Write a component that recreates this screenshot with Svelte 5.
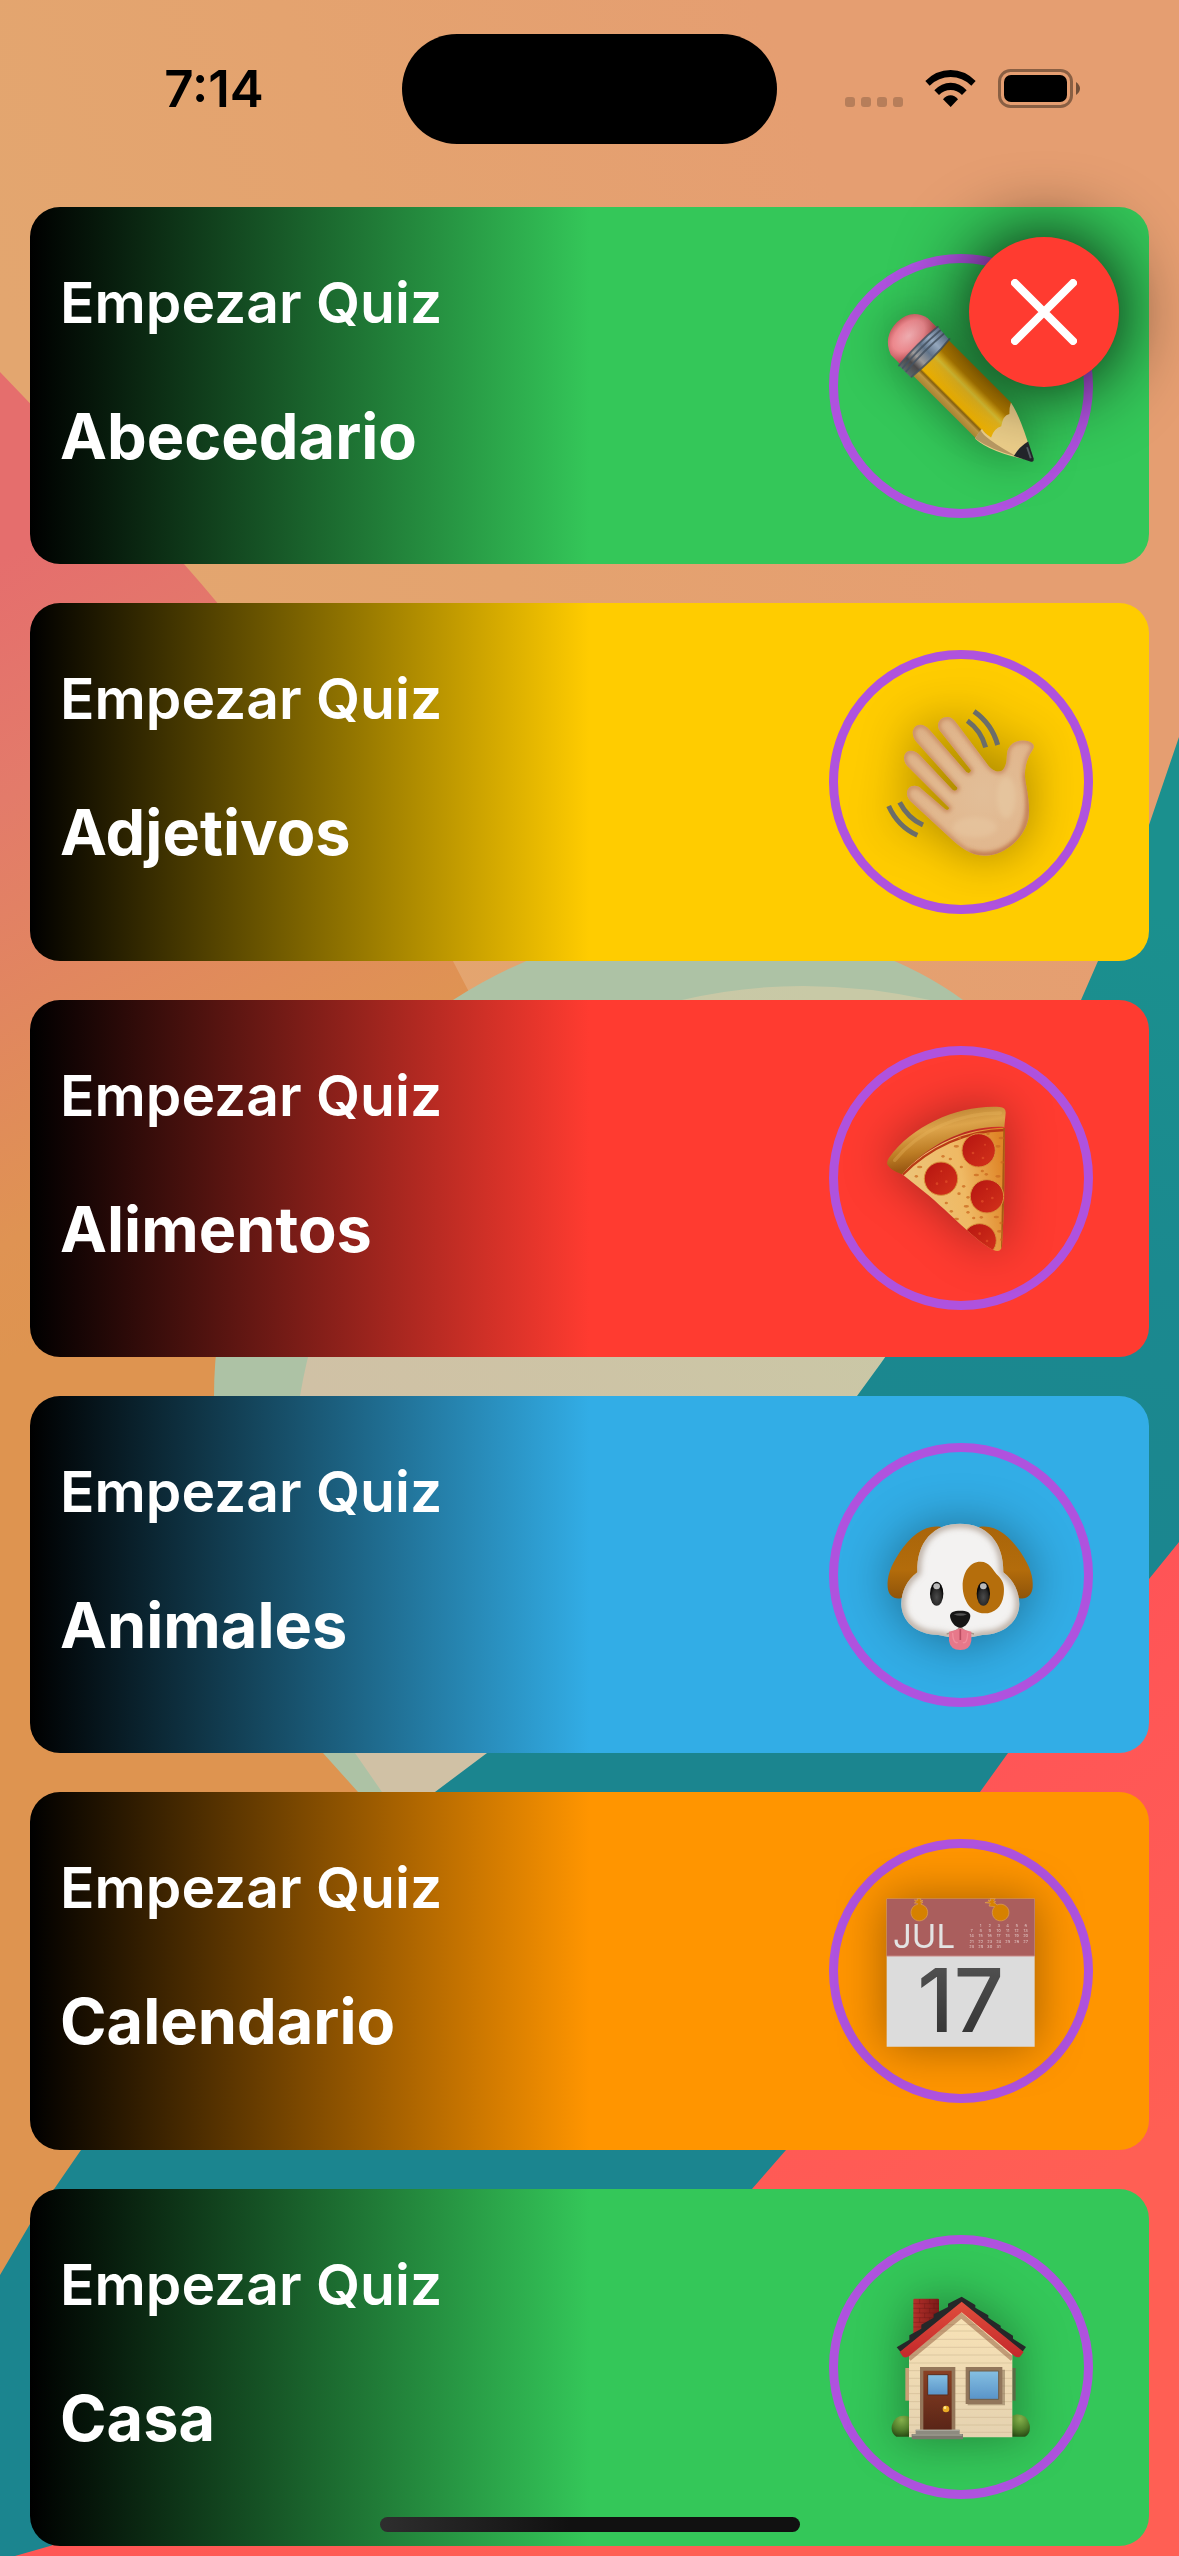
<script>
  const quizzes = [
    { title: 'Abecedario', tone: 'green', icon: 'pencil' },
    { title: 'Adjetivos', tone: 'yellow', icon: 'hand' },
    { title: 'Alimentos', tone: 'red', icon: 'pizza' },
    { title: 'Animales', tone: 'blue', icon: 'dog' },
    { title: 'Calendario', tone: 'orange', icon: 'calendar' },
    { title: 'Casa', tone: 'green', icon: 'house' }
  ];
  const days = Array.from({ length: 31 }, (_, i) => i + 1);
  const crumbs = [
    [470, 350], [452, 388], [485, 412], [530, 436], [548, 424], [560, 434], [595, 440], [505, 503],
    [455, 545], [470, 568], [522, 565], [545, 563], [590, 562], [480, 325], [565, 312], [605, 325],
    [608, 398], [604, 580], [500, 530], [492, 470], [430, 380], [360, 412], [350, 440], [478, 492],
    [600, 605], [606, 630], [530, 408], [595, 350], [505, 548], [440, 520]
  ];
  const boards = [315, 334, 359, 383, 406, 430, 453, 476, 499, 522, 546, 569, 593, 616, 638];
</script>

{#snippet pencil()}
  <svg class="emoji" viewBox="262 394 444 444" aria-hidden="true">
    <defs>
      <linearGradient id="pn-body" x1="0" y1="0" x2="0" y2="1">
        <stop offset="0" stop-color="#a87300" />
        <stop offset=".24" stop-color="#b98100" />
        <stop offset=".36" stop-color="#e0b21c" />
        <stop offset=".42" stop-color="#dfc637" />
        <stop offset=".48" stop-color="#e9b91f" />
        <stop offset=".78" stop-color="#f2b400" />
        <stop offset=".82" stop-color="#8a6410" />
        <stop offset=".88" stop-color="#c39a44" />
        <stop offset="1" stop-color="#ad8733" />
      </linearGradient>
      <linearGradient id="pn-metal" x1="0" y1="0" x2="0" y2="1">
        <stop offset="0" stop-color="#6a7f99" />
        <stop offset=".25" stop-color="#a6bbd3" />
        <stop offset=".45" stop-color="#687c93" />
        <stop offset=".65" stop-color="#a3a09f" />
        <stop offset=".8" stop-color="#4d4a4b" />
        <stop offset="1" stop-color="#5e6b6e" />
      </linearGradient>
      <radialGradient id="pn-rubber" cx=".55" cy=".5" r=".6">
        <stop offset="0" stop-color="#f4b0b4" />
        <stop offset=".6" stop-color="#ee8a8f" />
        <stop offset="1" stop-color="#bd5054" />
      </radialGradient>
    </defs>
    <g transform="translate(318 456) rotate(45) scale(1.108)">
      <path d="M52-70H14Q-35-58-37-4Q-36 52 14 71H52Z" fill="url(#pn-rubber)" />
      <path d="M92-68H335L380-47Q385 0 380 47L345 68H92Z" fill="url(#pn-body)" />
      <path d="M335-68Q385-58 483-3Q488 2 482 7Q390 68 335 70L330 38Q344 42 364 37Q352 14 362-4Q344-28 354-43Q342-54 335-68Z" fill="#edcf8a" />
      <path d="M335 70L330 43Q350 53 448 25Q390 60 335 70Z" fill="#b99a63" />
      <path d="M443-26Q436 0 443 29L487 7Q494 2 486-4Z" fill="#23262b" />
      <path d="M452-13L480 1" stroke="#596068" stroke-width="5" />
      <path d="M50-73Q42 0 50 76H96Q104 0 96-70Z" fill="url(#pn-metal)" />
      <path d="M50-73Q42 0 50 76M62-70Q56 0 62 73M75-70Q69 0 75 73M96-72Q104 0 96 73" fill="none" stroke="#465463" stroke-width="5" stroke-opacity=".8" stroke-linecap="round" />
    </g>
  </svg>
{/snippet}

{#snippet hand()}
  <svg class="emoji" viewBox="262 232 444 444" aria-hidden="true">
    <defs>
      <radialGradient id="hd-skin" gradientUnits="userSpaceOnUse" cx="550" cy="490" r="280">
        <stop offset="0" stop-color="#e2be98" />
        <stop offset=".6" stop-color="#e1b78e" />
        <stop offset="1" stop-color="#dcb188" />
      </radialGradient>
      <clipPath id="hd-clip">
        <path id="hd-shape" d="M418 297C407 273 428 256 447 259C457 261 464 268 471 278L562 399C577 422 603 432 614 411C628 386 614 365 632 345C649 325 685 326 699 339C709 350 695 361 688 377C676 404 672 430 680 466C686 500 691 536 686 565C677 614 622 675 555 675C513 675 481 649 451 621L334 513C321 500 318 484 327 473C338 462 354 464 365 474L436 535Q445 543 449 532L322 405C309 389 311 371 322 363C335 356 350 362 360 373L459 478Q470 485 474 472L351 335C336 318 335 296 349 286C363 278 379 285 390 298L500 424Q512 432 514 419Z" />
      </clipPath>
      <filter id="hd-soft" x="-20%" y="-20%" width="140%" height="140%"><feGaussianBlur stdDeviation="7" /></filter>
    </defs>
    <use href="#hd-shape" fill="url(#hd-skin)" />
    <g clip-path="url(#hd-clip)">
      <ellipse cx="620" cy="500" rx="28" ry="62" fill="#e8caa4" fill-opacity=".6" filter="url(#hd-soft)" />
      <ellipse cx="525" cy="590" rx="66" ry="30" fill="#e8c7a0" fill-opacity=".6" filter="url(#hd-soft)" />
      <use href="#hd-shape" fill="none" stroke="#bd7246" stroke-width="13" stroke-opacity=".65" filter="url(#hd-soft)" />
      <path d="M680 430Q700 540 660 620Q600 690 510 665" fill="none" stroke="#b86b43" stroke-width="14" stroke-opacity=".65" filter="url(#hd-soft)" />
    </g>
    <g fill="none" stroke="#6b6d69" stroke-width="15">
      <path d="M523 242Q577 280 594 343M503 270Q544 299 558 350M267 526Q295 588 353 614M300 515Q325 563 370 583" />
    </g>
  </svg>
{/snippet}

{#snippet pizza()}
  <svg class="emoji" viewBox="262 223 444 444" aria-hidden="true">
    <defs>
      <linearGradient id="pz-cheese" x1="0" y1=".6" x2="1" y2=".4">
        <stop offset="0" stop-color="#ecc67c" />
        <stop offset=".6" stop-color="#efb964" />
        <stop offset="1" stop-color="#df8527" />
      </linearGradient>
      <linearGradient id="pz-crust" x1=".4" y1=".1" x2=".6" y2=".8">
        <stop offset="0" stop-color="#c28937" />
        <stop offset=".3" stop-color="#dda44b" />
        <stop offset=".7" stop-color="#bd7d25" />
        <stop offset="1" stop-color="#9c5a13" />
      </linearGradient>
      <linearGradient id="pz-meat" x1="0" y1="0" x2="1" y2="1">
        <stop offset="0" stop-color="#b51410" />
        <stop offset="1" stop-color="#d4331b" />
      </linearGradient>
      <clipPath id="pz-clip"><path d="M306 432C390 345 500 295 616 294L613 530L607 650Q603 671 581 661C530 635 470 570 390 500Z" /></clipPath>
    </defs>
    <path d="M306 432C390 345 500 295 616 294L613 530L607 650Q603 671 581 661C530 635 470 570 390 500Z" fill="url(#pz-cheese)" />
    <g clip-path="url(#pz-clip)">
      <path d="M306 438C390 352 500 302 620 301" fill="none" stroke="#b93a15" stroke-width="7" />
      <path d="M615 294L608 660" stroke="#a75b15" stroke-width="8" />
      {#each crumbs as [x, y], i}
        <ellipse cx={x} cy={y} rx={i % 3 ? 5 : 8} ry="4" fill="#cb6a20" fill-opacity=".75" />
      {/each}
      <g fill="url(#pz-meat)" stroke="#d9913c" stroke-width="3">
        <circle cx="537" cy="362" r="50" />
        <circle cx="424" cy="447" r="50" />
        <circle cx="562" cy="500" r="50" />
        <circle cx="540" cy="632" r="50" />
      </g>
      <g fill="#e6552c" fill-opacity=".6">
        <circle cx="520" cy="370" r="4" /><circle cx="550" cy="385" r="4" /><circle cx="556" cy="345" r="3" />
        <circle cx="412" cy="462" r="4" /><circle cx="440" cy="456" r="4" /><circle cx="425" cy="425" r="3" />
        <circle cx="548" cy="515" r="4" /><circle cx="578" cy="505" r="4" /><circle cx="562" cy="478" r="3" />
        <circle cx="540" cy="612" r="4" /><circle cx="562" cy="634" r="4" />
      </g>
    </g>
    <path d="M264 407Q259 397 268 384C340 285 480 225 600 232Q619 233 618 250L614 292C500 285 385 345 307 434Q276 424 264 407Z" fill="url(#pz-crust)" />
    <path d="M285 392C360 300 480 250 602 250" fill="none" stroke="#e8b45c" stroke-width="10" stroke-opacity=".35" stroke-linecap="round" />
  </svg>
{/snippet}

{#snippet dog()}
  <svg class="emoji" viewBox="262 211 444 444" aria-hidden="true">
    <defs>
      <linearGradient id="dg-ear" x1="0" y1="0" x2="0" y2="1">
        <stop offset="0" stop-color="#a9650a" />
        <stop offset=".6" stop-color="#b36c0b" />
        <stop offset="1" stop-color="#8f540a" />
      </linearGradient>
      <radialGradient id="dg-eye" cx=".5" cy=".65" r=".5">
        <stop offset="0" stop-color="#4a4a4a" />
        <stop offset=".7" stop-color="#2a2a2a" />
        <stop offset="1" stop-color="#080808" />
      </radialGradient>
      <filter id="dg-soft" x="-20%" y="-20%" width="140%" height="140%"><feGaussianBlur stdDeviation="10" /></filter>
      <clipPath id="dg-clip">
        <path id="dg-face" d="M481 279C560 279 613 333 611 425C643 450 659 485 659 520C659 570 615 612 548 613Q515 622 482 622Q450 622 416 613C348 612 305 570 305 520C305 485 320 450 353 425C350 333 402 279 481 279Z" />
      </clipPath>
    </defs>
    <path d="M425 289C380 280 335 312 300 365C270 410 262 440 264 470C266 496 285 508 306 502L380 430Z" fill="url(#dg-ear)" />
    <path d="M538 289C583 280 628 312 663 365C693 410 701 440 699 470C697 496 678 508 657 502L583 430Z" fill="url(#dg-ear)" />
    <use href="#dg-face" fill="#f3f2f1" />
    <g clip-path="url(#dg-clip)">
      <use href="#dg-face" fill="none" stroke="#9d8b7a" stroke-width="18" stroke-opacity=".8" filter="url(#dg-soft)" />
      <path d="M542 393C572 393 578 418 597 437C612 452 615 470 612 492C607 530 584 548 554 548C515 548 489 510 489 466C489 424 511 393 542 393Z" fill="#b56e0c" />
    </g>
    <ellipse cx="411" cy="489" rx="20" ry="36" fill="url(#dg-eye)" />
    <ellipse cx="551" cy="489" rx="20" ry="36" fill="url(#dg-eye)" />
    <ellipse cx="411" cy="467" rx="10" ry="9" fill="#d8d8d8" fill-opacity=".85" />
    <ellipse cx="551" cy="467" rx="10" ry="9" fill="#d8d8d8" fill-opacity=".85" />
    <path d="M441 610Q470 604 482 589Q496 604 523 610" fill="none" stroke="#a59788" stroke-width="4" />
    <path d="M448 603Q468 600 482 592Q497 600 515 603V630Q511 658 482 658Q452 658 448 630Z" fill="#e7788a" />
    <path d="M459 608Q460 638 473 636M504 608Q503 638 491 636" fill="none" stroke="#f08d9d" stroke-width="4" stroke-linecap="round" />
    <path d="M482 595V628" stroke="#bb4d61" stroke-width="5" />
    <path d="M482 540C502 540 512 545 512 556C511 572 497 591 482 591C466 591 452 572 451 556C451 545 462 540 482 540Z" fill="#161616" />
    <path d="M462 551Q482 544 502 551Q482 560 462 551Z" fill="#555" />
  </svg>
{/snippet}

{#snippet calendar()}
  <svg class="emoji" viewBox="262 229 444 444" aria-hidden="true">
    <defs>
      <linearGradient id="cl-num" x1="0" y1="0" x2="0" y2="1">
        <stop offset="0" stop-color="#575757" />
        <stop offset="1" stop-color="#2f2f2f" />
      </linearGradient>
    </defs>
    <path d="M261 234H705V678H261Z" fill="#dcdcdc" />
    <path d="M261 234H705V406H261Z" fill="#aa5e5d" />
    <path d="M261 406H705" stroke="#c98783" stroke-width="3" />
    <g fill="#d68100" stroke="#e0a255" stroke-width="2">
      <path d="M352 234L354 239L344 238L350 243L344 247L354 248V251A25 25 0 1 0 364 251V248L370 245L362 243L370 240L362 238L363 234Z" />
      <path d="M571 234L574 240L565 238L570 243L556 246L572 248L568 256L585 258A25 25 0 1 0 592 253L587 248L582 246L588 243L582 240L587 234Z" />
    </g>
    <text class="month" x="280" y="383">JUL</text>
    <g class="days">
      {#each days as d}
        <text x={516 + (d % 7) * 27} y={318 + Math.floor(d / 7) * 16}>{d}</text>
      {/each}
    </g>
    <text class="date" x="483" y="634" fill="url(#cl-num)">17</text>
  </svg>
{/snippet}

{#snippet house()}
  <svg class="emoji" viewBox="262 220 444 444" aria-hidden="true">
    <defs>
      <linearGradient id="hs-wall" x1="0" y1="0" x2="0" y2="1">
        <stop offset="0" stop-color="#f9e3b6" />
        <stop offset="1" stop-color="#e5d2b0" />
      </linearGradient>
      <linearGradient id="hs-brick" x1="0" y1="0" x2="1" y2="0">
        <stop offset="0" stop-color="#b5302a" />
        <stop offset="1" stop-color="#7a1a18" />
      </linearGradient>
      <linearGradient id="hs-door" x1="0" y1="0" x2="0" y2="1">
        <stop offset="0" stop-color="#8a4023" />
        <stop offset="1" stop-color="#5a2517" />
      </linearGradient>
      <linearGradient id="hs-glass" x1="0" y1="0" x2="0" y2="1">
        <stop offset="0" stop-color="#85bfe2" />
        <stop offset="1" stop-color="#5994c8" />
      </linearGradient>
      <linearGradient id="hs-red" x1="0" y1="0" x2="0" y2="1">
        <stop offset="0" stop-color="#e04e3c" />
        <stop offset="1" stop-color="#c4282b" />
      </linearGradient>
      <radialGradient id="hs-bush" cx=".5" cy=".2" r=".8">
        <stop offset="0" stop-color="#86b04c" />
        <stop offset=".6" stop-color="#527f2b" />
        <stop offset="1" stop-color="#2b4d15" />
      </radialGradient>
      <clipPath id="hs-clip"><path d="M328 400L485 268L638 400V653H328Z" /></clipPath>
    </defs>
    <path d="M335 651H290Q272 640 277 616Q286 586 315 588L335 592Z" fill="url(#hs-bush)" />
    <path d="M632 651H676Q694 642 690 615Q682 584 652 584L632 590Z" fill="url(#hs-bush)" />
    <path d="M317 445H330V543H317Z" fill="#c9a077" />
    <path d="M636 445H648V543H636Z" fill="#5b6b45" />
    <path d="M341 240Q341 237 344 237H415Q418 237 418 240V310L341 350Z" fill="url(#hs-brick)" />
    <path d="M341 252H418M341 266H418M341 280H418M341 294H418M341 308H410M341 322H390M360 238V252M390 238V252M375 252V266M403 252V266M360 266V280M390 266V280M375 280V294M403 280V294M360 294V308M390 294V308" stroke="#5f1512" stroke-width="2" stroke-opacity=".5" />
    <path d="M328 400L485 268L638 400V653H328Z" fill="url(#hs-wall)" />
    <g clip-path="url(#hs-clip)">
      {#each boards as y}
        <path d="M328 {y}H638" stroke="#c9b48d" stroke-width="3" stroke-opacity=".5" />
      {/each}
      <path d="M328 418L485 288L638 418" fill="none" stroke="#8f5a3a" stroke-width="14" stroke-opacity=".5" />
    </g>
    <path d="M291 383L329 360V347L365 327V315L402 294V284L445 262V252L486 231L527 256V264L566 287V294L603 318V324L640 348V357L679 382L668 397L486 252L303 397Z" fill="#252829" />
    <path d="M300 397L486 246L672 397L661 411Q655 415 645 410L486 278L328 410Q318 416 310 411Z" fill="url(#hs-red)" />
    <path d="M361 442H467V630H361Z" fill="#94765a" />
    <path d="M371 453H456V630H371Z" fill="url(#hs-door)" />
    <path d="M384 465H445V526H384Z" fill="url(#hs-glass)" stroke="#5c2c1b" stroke-width="3" />
    <circle cx="439" cy="568" r="10" fill="#e9ac26" />
    <circle cx="436" cy="564" r="4" fill="#ffe891" />
    <path d="M504 450H616V557H504Z" fill="#7b6549" fill-opacity=".5" />
    <path d="M498 442H608V553H498Z" fill="#92765b" />
    <path d="M509 454H597V539H509Z" fill="url(#hs-glass)" stroke="#6f5c46" stroke-width="3" />
    <path d="M348 630H480V643H348Z" fill="#8d8b80" />
    <path d="M336 643H490V659H336Z" fill="#7b796d" />
    <path d="M348 632H480M338 646H488" stroke="#aeaca1" stroke-width="3" />
  </svg>
{/snippet}

<div class="page">
  <svg class="backdrop" viewBox="0 0 1179 2556" preserveAspectRatio="none" aria-hidden="true">
    <defs>
      <linearGradient id="bg-sky" gradientUnits="userSpaceOnUse" x1="0" y1="300" x2="760" y2="0">
        <stop offset="0" stop-color="#e3a66f" />
        <stop offset=".45" stop-color="#e4a36f" />
        <stop offset="1" stop-color="#e59e71" />
      </linearGradient>
      <linearGradient id="bg-petal" gradientUnits="userSpaceOnUse" x1="0" y1="560" x2="340" y2="1180">
        <stop offset="0" stop-color="#e56e6d" />
        <stop offset=".3" stop-color="#e37b6a" />
        <stop offset=".85" stop-color="#df9353" />
        <stop offset="1" stop-color="#de9450" />
      </linearGradient>
      <linearGradient id="bg-teal" gradientUnits="userSpaceOnUse" x1="1100" y1="900" x2="950" y2="1600">
        <stop offset="0" stop-color="#1b908e" />
        <stop offset=".5" stop-color="#1b898f" />
        <stop offset="1" stop-color="#1b858f" />
      </linearGradient>
      <linearGradient id="bg-coral" gradientUnits="userSpaceOnUse" x1="780" y1="1750" x2="1100" y2="2180">
        <stop offset="0" stop-color="#ff5257" />
        <stop offset="1" stop-color="#ff5f54" />
      </linearGradient>
      <linearGradient id="bg-leaf" gradientUnits="userSpaceOnUse" x1="400" y1="1500" x2="900" y2="1100">
        <stop offset="0" stop-color="#d0c1a5" />
        <stop offset="1" stop-color="#c8c9a6" />
      </linearGradient>
    </defs>
    <path d="M0 0H1179V2556H0Z" fill="url(#bg-sky)" />
    <path d="M0 372L184 564Q340 740 468 990L800 1600L0 2400Z" fill="url(#bg-petal)" />
    <path d="M453 1000Q570 925 700 925Q860 925 963 1000L1100 1250L600 1850H410L358 1792L323 1753Q210 1600 214 1396Q214 1160 453 1000Z" fill="#adc2a5" />
    <path d="M682 1000Q800 972 930 1000L1100 1250L600 1850H412L382 1792L355 1753Q290 1580 300 1396Q350 1100 682 1000Z" fill="url(#bg-leaf)" />
    <path d="M1179 737L1149 825L1098 961L1081 1000Q1010 1190 857 1396Q700 1570 487 1753L435 1792Q200 1990 81 2150L30 2224L0 2275V2556H1179Z" fill="url(#bg-teal)" />
    <path d="M1179 1542L1008 1753L980 1792L786 2150L752 2189Q520 2400 50 2546L15 2556H1179Z" fill="url(#bg-coral)" />
  </svg>

  <header class="status">
    <time class="clock">7:14</time>
    <div class="island"></div>
    <div class="signals">
      <svg width="58" height="40" viewBox="0 0 58 40" role="img" aria-label="Sin señal móvil">
        <g fill-opacity=".2">
          <rect x="0" y="28" width="10" height="10" rx="3" />
          <rect x="16" y="28" width="10" height="10" rx="3" />
          <rect x="32" y="28" width="10" height="10" rx="3" />
          <rect x="48" y="28" width="10" height="10" rx="3" />
        </g>
      </svg>
      <svg width="51" height="40" viewBox="378 114 153 120" role="img" aria-label="Wi-Fi">
        <path d="M379 150Q411 117 455 117Q498 117 530 150L517 164Q490 138 455 138Q419 138 392 164Z" />
        <path d="M406 178Q427 155 455 155Q483 155 503 178L489 192Q474 177 455 177Q435 177 420 192Z" />
        <path d="M432 205Q442 193 455 193Q467 193 477 205L455 228Z" />
      </svg>
      <svg width="82" height="40" viewBox="0 0 82 40" role="img" aria-label="Batería completa">
        <rect x="1.5" y="1.5" width="72" height="36" rx="11" fill="none" stroke="#000" stroke-width="3" stroke-opacity=".4" />
        <rect x="6" y="6" width="63" height="27" rx="7" />
        <path d="M78 13Q82 16 82 19.500Q82 23 78 26Z" fill-opacity=".5" />
      </svg>
    </div>
  </header>

  <main class="list">
    {#each quizzes as quiz}
      <button type="button" class="card {quiz.tone}">
        <span class="copy">
          <span class="lead">Empezar Quiz</span>
          <span class="title">{quiz.title}</span>
        </span>
        <span class="ring">
          {#if quiz.icon === 'pencil'}{@render pencil()}
          {:else if quiz.icon === 'hand'}{@render hand()}
          {:else if quiz.icon === 'pizza'}{@render pizza()}
          {:else if quiz.icon === 'dog'}{@render dog()}
          {:else if quiz.icon === 'calendar'}{@render calendar()}
          {:else}{@render house()}{/if}
        </span>
      </button>
    {/each}
  </main>

  <button type="button" class="close" aria-label="Cerrar">
    <svg width="66" height="66" viewBox="0 0 66 66" aria-hidden="true">
      <path d="M4 4L62 62M62 4L4 62" stroke="#fff" stroke-width="8" stroke-linecap="round" />
    </svg>
  </button>
  <div class="home"></div>
</div>

<style>
  .page {
    position: relative;
    isolation: isolate;
    box-sizing: border-box;
    display: flex;
    flex-direction: column;
    min-height: 100vh;
    padding-bottom: 10px;
    overflow: hidden;
    font-family: Inter, 'Liberation Sans', sans-serif;
  }
  .backdrop {
    position: absolute;
    inset: 0;
    z-index: -1;
    width: 100%;
    height: 100%;
  }
  .status {
    display: grid;
    grid-template-columns: 1fr 375px 1fr;
    align-items: center;
    padding: 34px 0 63px;
  }
  .clock {
    padding-left: 26px;
    text-align: center;
    font-size: 51px;
    line-height: 60px;
    font-weight: 600;
  }
  .island {
    height: 110px;
    border-radius: 55px;
    background: #000;
  }
  .signals {
    display: flex;
    justify-content: center;
    gap: 22px;
    padding-right: 31px;
  }
  .list {
    flex: 1;
    display: grid;
    grid-auto-rows: 1fr;
    gap: 39px;
    padding: 0 30px;
  }
  .card {
    display: flex;
    align-items: center;
    justify-content: space-between;
    min-height: 357px;
    padding: 0 56px 0 30px;
    border: 0;
    border-radius: 30px;
    color: #fff;
    font-family: inherit;
    text-align: left;
    cursor: pointer;
    background: linear-gradient(90deg, #000, var(--tone) 50%);
  }
  .green { --tone: #34c759; }
  .yellow { --tone: #ffcc00; }
  .red { --tone: #ff3b30; }
  .blue { --tone: #32ade6; }
  .orange { --tone: #ff9500; }
  .copy {
    display: flex;
    flex-direction: column;
    align-self: flex-start;
    gap: 59px;
    padding-top: 61px;
  }
  .lead {
    font-size: 57px;
    line-height: 70px;
    font-weight: 600;
  }
  .title {
    font-size: 63px;
    line-height: 78px;
    font-weight: 700;
  }
  .ring {
    box-sizing: border-box;
    display: grid;
    place-items: center;
    width: 264px;
    height: 264px;
    border: 9px solid #af52de;
    border-radius: 50%;
  }
  .emoji {
    width: 148px;
    height: 148px;
    overflow: visible;
    filter: drop-shadow(0 0 24px rgba(0, 0, 0, 0.36));
  }
  .month {
    font-size: 99px;
    font-weight: 400;
    fill: #e3e3e3;
  }
  .days {
    font-size: 12px;
    font-weight: 500;
    fill: #dcbcba;
    text-anchor: middle;
  }
  .date {
    font-size: 264px;
    font-weight: 500;
    text-anchor: middle;
  }
  .close {
    position: absolute;
    top: 237px;
    right: 60px;
    display: grid;
    place-items: center;
    width: 150px;
    height: 150px;
    padding: 0;
    border: 0;
    border-radius: 50%;
    background: #ff3b30;
    box-shadow: 0 0 76px rgba(0, 0, 0, 0.95);
    cursor: pointer;
  }
  .home {
    position: absolute;
    bottom: 24px;
    left: 50%;
    width: 420px;
    height: 15px;
    border-radius: 8px;
    background: linear-gradient(90deg, #2e2e2e, #111 45%);
    transform: translateX(-50%);
  }
</style>
